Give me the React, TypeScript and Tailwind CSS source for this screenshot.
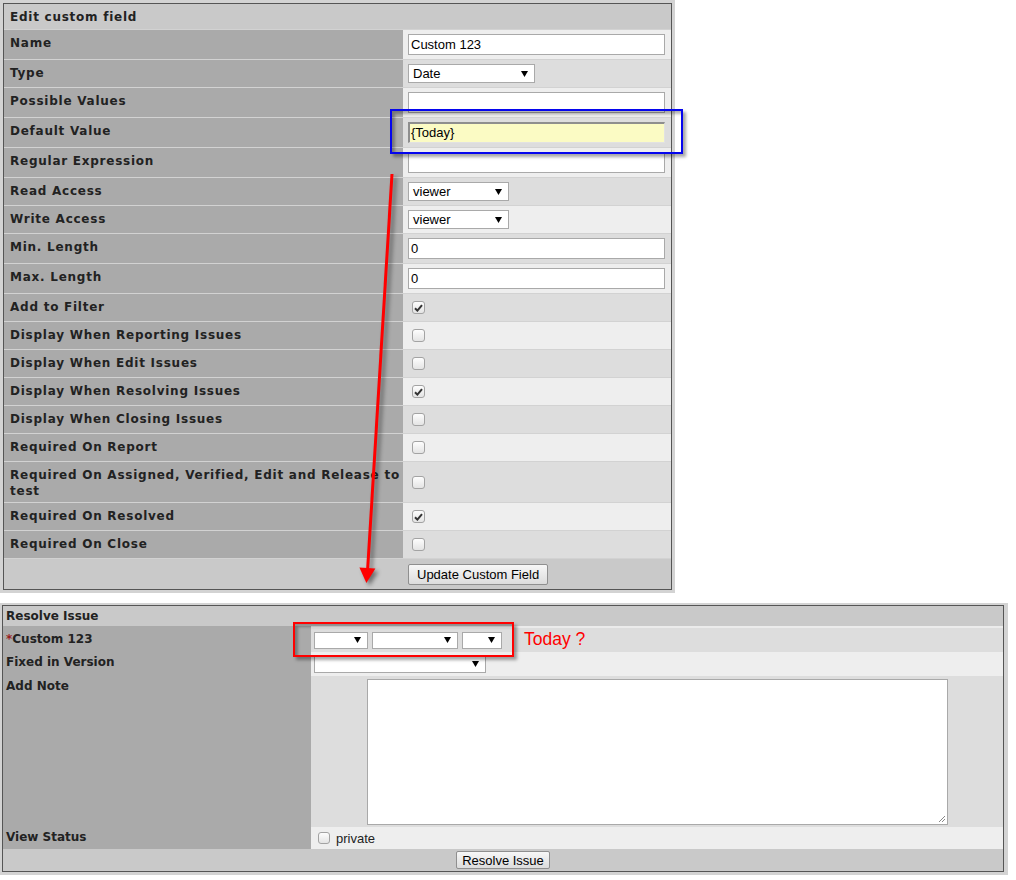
import React from "react";

const LBL =
  "font-['DejaVu_Sans',Verdana,sans-serif] font-bold text-[12px] leading-[16px] text-[#222]";
const LBLT = `${LBL} tracking-[0.75px]`;
const ARIAL = "font-['Liberation_Sans',Arial,sans-serif]";

function Tri() {
  return (
    <svg width="7" height="6" viewBox="0 0 7 6" className="shrink-0">
      <polygon points="0,0 7,0 3.5,6" fill="#000" />
    </svg>
  );
}

function Select({ size, text }: { size: string; text?: string }) {
  return (
    <div
      className={`flex items-center justify-between bg-white border border-[#a9a9a9] pl-[4px] pr-[6px] text-[13px] leading-none text-black ${ARIAL} ${size}`}
    >
      <span>{text ?? ""}</span>
      <Tri />
    </div>
  );
}

function TextInput({ value }: { value?: string }) {
  return (
    <div
      className={`w-[257px] h-[21px] bg-white border border-[#a9a9a9] pl-[2px] text-[13px] leading-[19px] text-black ${ARIAL}`}
    >
      {value ?? ""}
    </div>
  );
}

function FocusInput({ value }: { value: string }) {
  return (
    <div
      className={`w-[257px] h-[21px] bg-[#fbfbc4] border-t-2 border-l-2 border-r border-b border-t-[#8e8e8e] border-l-[#8e8e8e] border-r-[#e2e2e2] border-b-[#e2e2e2] pl-[1px] text-[13px] leading-[17px] text-black ${ARIAL}`}
    >
      {value}
    </div>
  );
}

function Check({ checked, small }: { checked?: boolean; small?: boolean }) {
  return (
    <div
      className={`${small ? "w-[12px] h-[12px]" : "w-[13px] h-[13px]"} shrink-0 rounded-[3px] border border-[#a3a3a3] bg-linear-to-b from-[#fdfdfd] to-[#e4e4e4] flex items-center justify-center`}
    >
      {checked && (
        <svg width="9" height="8" viewBox="0 0 9 8">
          <path d="M1 4.2 L3.4 6.6 L8 1.2" stroke="#333" strokeWidth="2" fill="none" />
        </svg>
      )}
    </div>
  );
}

type Kind = "input" | "select" | "focus" | "check";
type Row = {
  label: React.ReactNode;
  kind: Kind;
  value?: string;
  size?: string;
  checked?: boolean;
  tall?: boolean;
};

const topRows: Row[] = [
  { label: "Name", kind: "input", value: "Custom 123" },
  { label: "Type", kind: "select", value: "Date", size: "w-[127px] h-[19px]" },
  { label: "Possible Values", kind: "input" },
  { label: "Default Value", kind: "focus", value: "{Today}" },
  { label: "Regular Expression", kind: "input" },
  { label: "Read Access", kind: "select", value: "viewer", size: "w-[101px] h-[19px]" },
  { label: "Write Access", kind: "select", value: "viewer", size: "w-[101px] h-[19px]" },
  { label: "Min. Length", kind: "input", value: "0" },
  { label: "Max. Length", kind: "input", value: "0" },
  { label: "Add to Filter", kind: "check", checked: true },
  { label: "Display When Reporting Issues", kind: "check" },
  { label: "Display When Edit Issues", kind: "check" },
  { label: "Display When Resolving Issues", kind: "check", checked: true },
  { label: "Display When Closing Issues", kind: "check" },
  { label: "Required On Report", kind: "check" },
  {
    label: (
      <>
        Required On Assigned, Verified, Edit and Release to
        <br />
        test
      </>
    ),
    kind: "check",
    tall: true,
  },
  { label: "Required On Resolved", kind: "check", checked: true },
  { label: "Required On Close", kind: "check" },
];

function TopRow({ row, index }: { row: Row; index: number }) {
  const odd = (index + 1) % 2 === 1;
  const bg = odd ? "bg-[#eeeeee]" : "bg-[#dddddd]";
  let h = "h-[29px]";
  const pt = "pt-[5px]";
  if (row.kind === "select") h = "h-[27px]";
  if (row.kind === "check") h = row.tall ? "h-[40px]" : "h-[27px]";
  let control: React.ReactNode = null;
  if (row.kind === "input") control = <TextInput value={row.value} />;
  if (row.kind === "focus") control = <FocusInput value={row.value ?? ""} />;
  if (row.kind === "select") control = <Select size={row.size ?? ""} text={row.value} />;
  if (row.kind === "check")
    control = (
      <div className="ml-[4px]">
        <Check checked={row.checked} />
      </div>
    );
  return (
    <div className="flex border-t border-[#d2d2d2]">
      <div className={`w-[399px] shrink-0 bg-[#aaaaaa] pl-[6px] pr-[0px] whitespace-nowrap ${h} ${pt} ${LBLT}`}>
        {row.label}
      </div>
      <div className={`flex-1 ${bg} ${h} flex items-center px-[5px]`}>{control}</div>
    </div>
  );
}

function Textarea() {
  return (
    <div className="relative w-[581px] h-[146px] bg-white border border-[#a9a9a9]">
      <svg
        width="8"
        height="8"
        viewBox="0 0 8 8"
        className="absolute right-[1px] bottom-[1px]"
      >
        <path d="M7 1 L1 7 M7 4 L4 7" stroke="#888" strokeWidth="1" />
      </svg>
    </div>
  );
}

export default function App() {
  return (
    <div className="relative w-[1016px] h-[880px] bg-white overflow-hidden">
      {/* Top panel */}
      <div className="w-[675px] bg-[#d3d3d3] p-[3px]">
        <div className="border border-[#555555] bg-[#c9c9c9]">
          <div className={`h-[25px] bg-[#c9c9c9] pl-[6px] pt-[5px] ${LBLT}`}>Edit custom field</div>
          {topRows.map((r, i) => (
            <TopRow key={i} row={r} index={i} />
          ))}
          <div className="flex border-t border-[#d2d2d2] h-[31px] bg-[#c9c9c9]">
            <div className="w-[399px] shrink-0" />
            <div className="flex items-center pl-[5px]">
              <button
                className={`h-[21px] px-[8px] border border-[#8f8f8f] rounded-[2px] bg-linear-to-b from-[#f7f7f7] to-[#dcdcdc] text-[13px] leading-none text-black ${ARIAL}`}
              >
                Update Custom Field
              </button>
            </div>
          </div>
        </div>
      </div>

      {/* Bottom panel */}
      <div className="mt-[10px] w-[1008px] bg-[#d3d3d3] pt-[2px] pl-[2px] pr-[4px] pb-[3px]">
        <div className="border border-[#555555] bg-[#c9c9c9]">
          <div className={`h-[20px] bg-[#c9c9c9] pl-[3px] pt-[2px] ${LBL}`}>Resolve Issue</div>
          {/* Custom 123 */}
          <div className="flex h-[26px]">
            <div className={`w-[308px] shrink-0 bg-[#aaaaaa] pl-[3px] pt-[5px] ${LBL}`}>
              <span className="text-[#9a1f1f]">*</span>Custom 123
            </div>
            <div className="flex-1 bg-[#dddddd] border-t-2 border-[#ebebeb] flex items-center gap-[4px] pl-[3px]">
              <Select size="w-[54px] h-[17px]" />
              <Select size="w-[86px] h-[17px]" />
              <Select size="w-[40px] h-[17px]" />
            </div>
          </div>
          {/* Fixed in Version */}
          <div className="flex h-[24px]">
            <div className={`w-[308px] shrink-0 bg-[#aaaaaa] pl-[3px] pt-[2px] ${LBL}`}>
              Fixed in Version
            </div>
            <div className="flex-1 bg-[#eeeeee] flex items-center pl-[3px]">
              <Select size="w-[172px] h-[18px]" />
            </div>
          </div>
          {/* Add Note */}
          <div className="flex h-[151px]">
            <div className={`w-[308px] shrink-0 bg-[#aaaaaa] pl-[3px] pt-[2px] ${LBL}`}>Add Note</div>
            <div className="flex-1 bg-[#dddddd] flex justify-center pt-[3px]">
              <Textarea />
            </div>
          </div>
          {/* View Status */}
          <div className="flex h-[22px]">
            <div className={`w-[308px] shrink-0 bg-[#aaaaaa] pl-[3px] pt-[2px] ${LBL}`}>View Status</div>
            <div className="flex-1 bg-[#eeeeee] flex items-center pl-[7px] gap-[6px]">
              <Check small />
              <span className={`text-[13px] leading-none text-[#222] ${ARIAL}`}>private</span>
            </div>
          </div>
          {/* Button row */}
          <div className="h-[22px] bg-[#c9c9c9] flex items-center justify-center">
            <button
              className={`h-[18px] px-[5px] border border-[#8f8f8f] rounded-[2px] bg-linear-to-b from-[#f7f7f7] to-[#dcdcdc] text-[13px] leading-none text-black ${ARIAL}`}
            >
              Resolve Issue
            </button>
          </div>
        </div>
      </div>

      {/* Annotations */}
      <div className="absolute left-[390px] top-[109px] w-[293px] h-[45px] border-2 border-[#0505ee] shadow-[3px_3px_3px_rgba(0,0,0,0.35),inset_3px_3px_3px_rgba(0,0,0,0.3)]" />
      <div className="absolute left-[293px] top-[622px] w-[221px] h-[35px] border-2 border-[#ff0000] shadow-[3px_3px_3px_rgba(0,0,0,0.35),inset_3px_3px_3px_rgba(0,0,0,0.3)]" />
      <div className={`absolute left-[524px] top-[631px] text-[17.5px] leading-none text-[#ff0000] ${ARIAL}`}>
        Today ?
      </div>
      <svg
        width="1016"
        height="880"
        viewBox="0 0 1016 880"
        className="absolute left-0 top-0 pointer-events-none drop-shadow-[3px_3px_2px_rgba(0,0,0,0.45)]"
      >
        <line x1="392" y1="174" x2="367.6" y2="570" stroke="#ff0000" strokeWidth="3" />
        <polygon points="366.4,583 359.4,567.5 375.4,568.5" fill="#ff0000" />
      </svg>
    </div>
  );
}
